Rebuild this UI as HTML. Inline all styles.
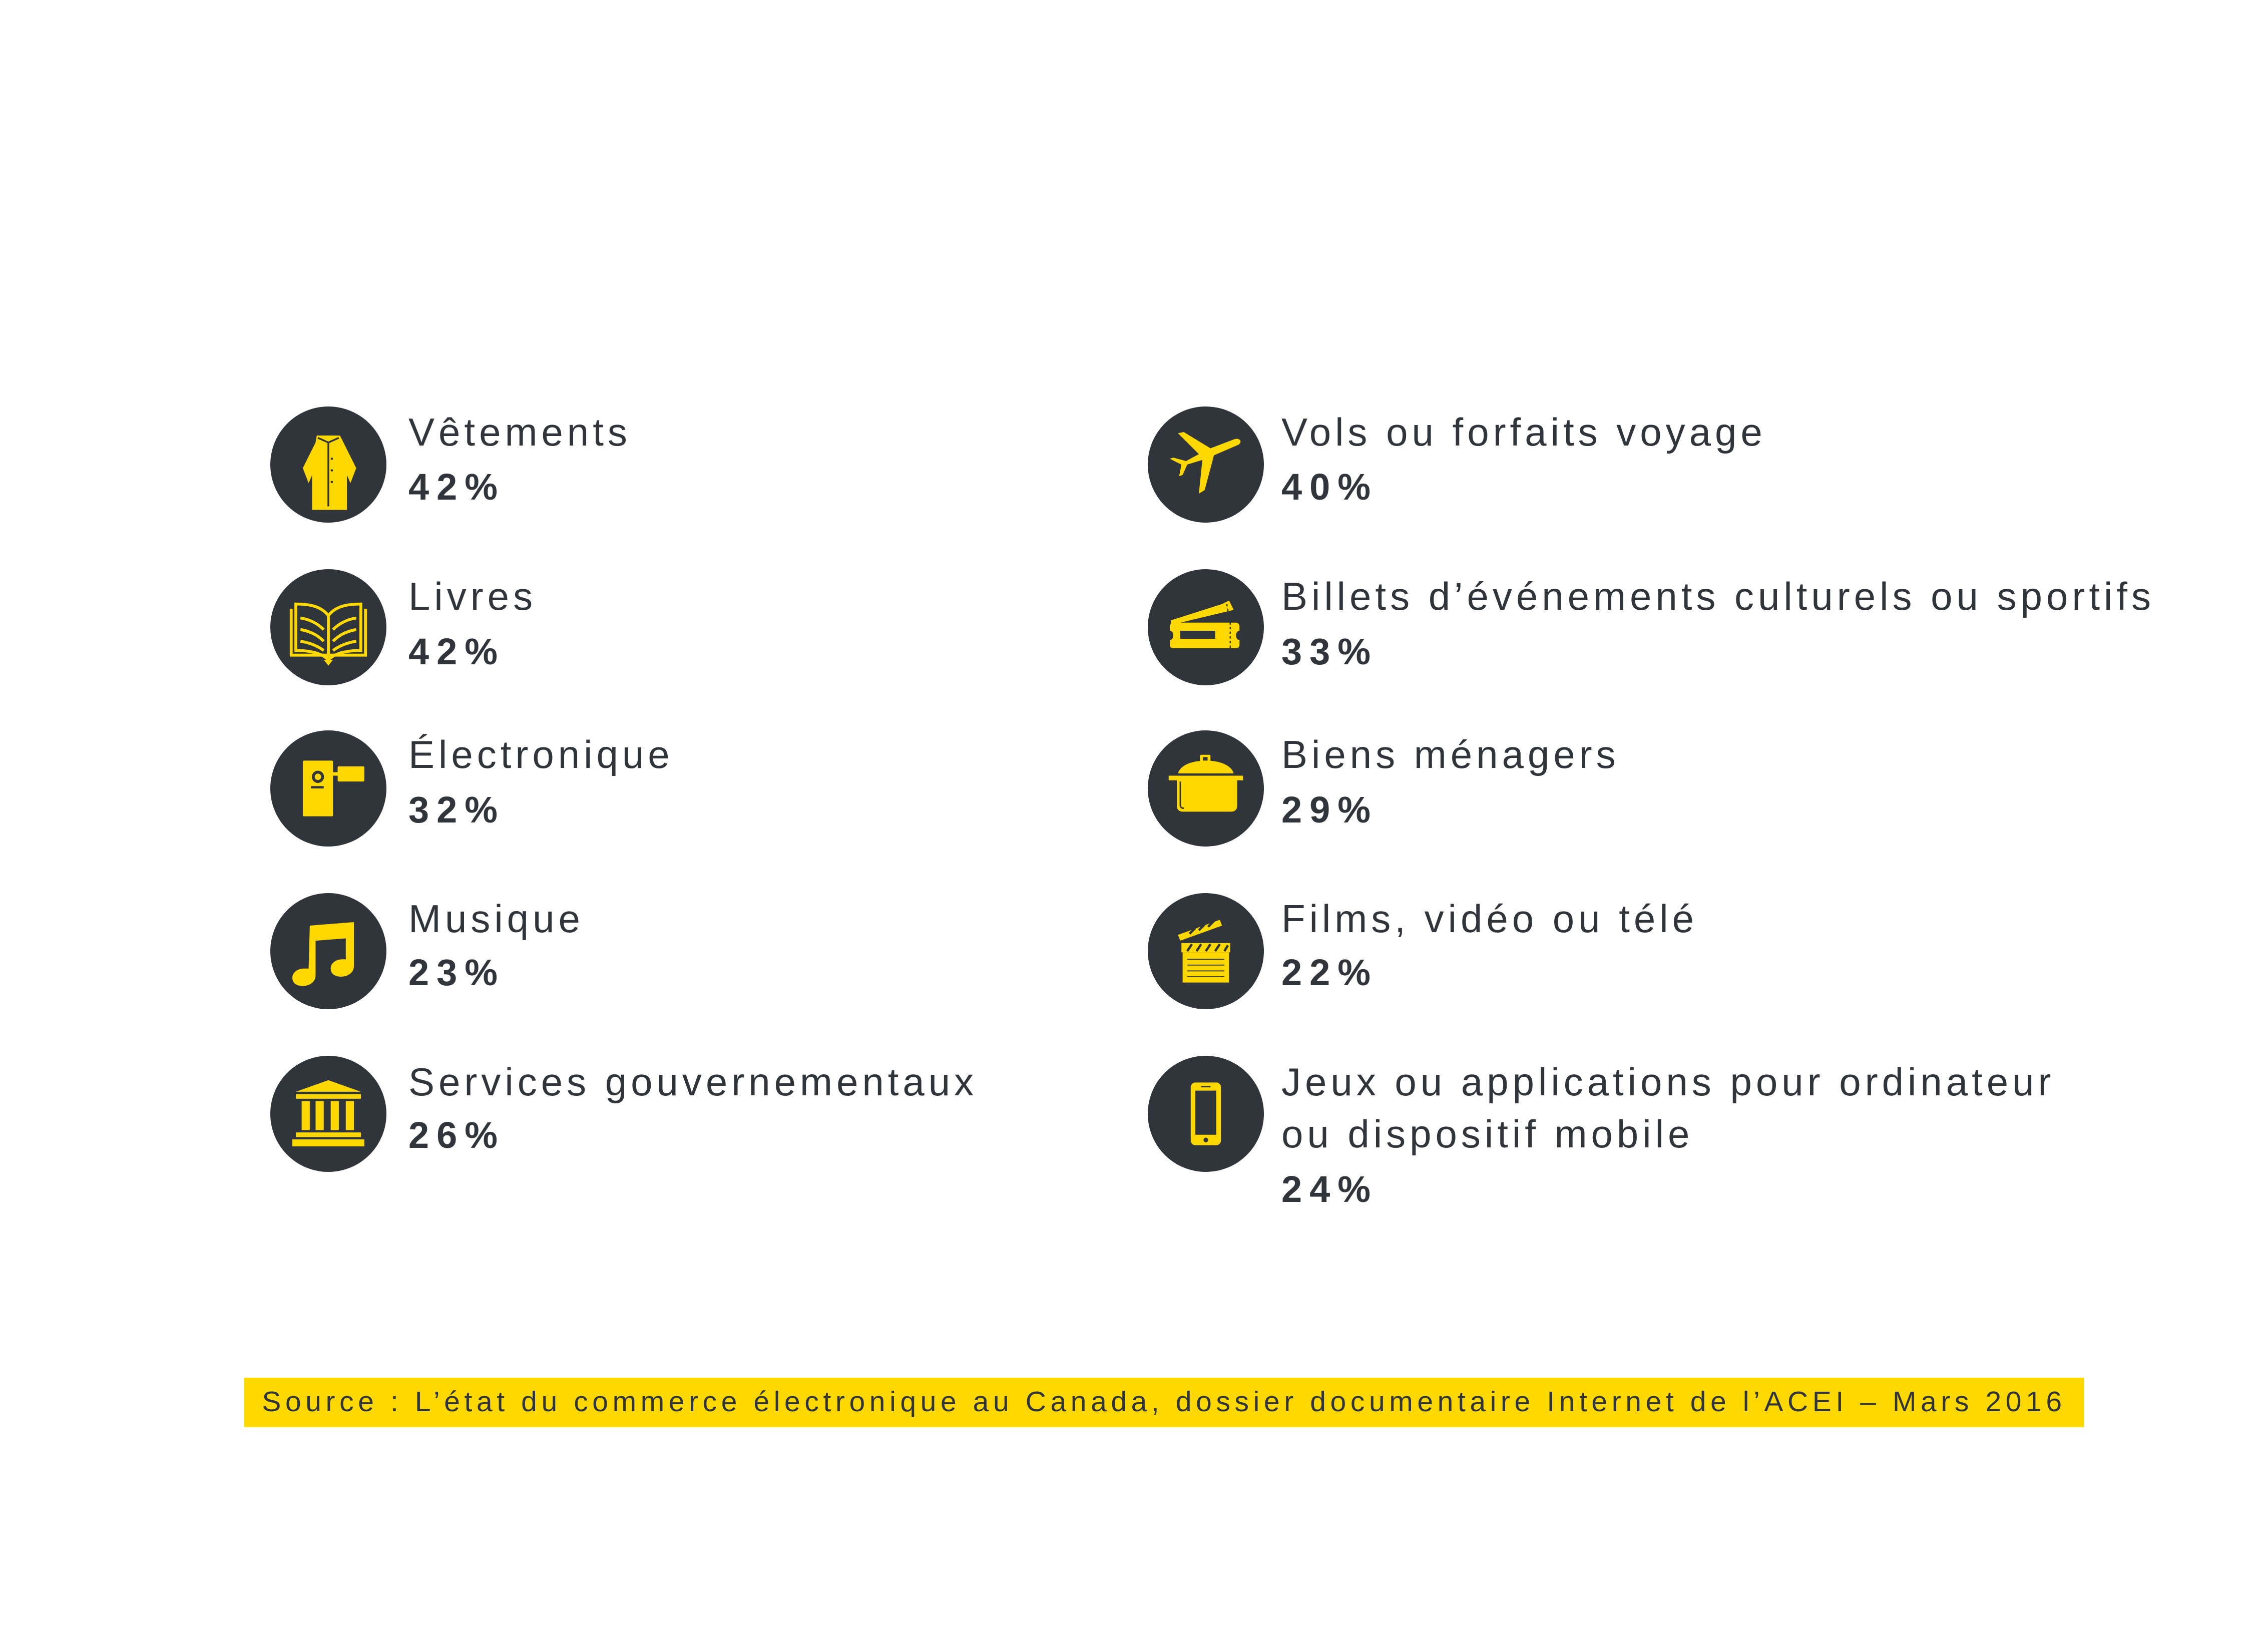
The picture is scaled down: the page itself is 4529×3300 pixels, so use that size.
<!DOCTYPE html>
<html><head><meta charset="utf-8"><style>
html,body{margin:0;padding:0;background:#fff;}
body{width:4529px;height:3300px;position:relative;overflow:hidden;font-family:"Liberation Sans",sans-serif;color:#30343b;}
.c{position:absolute;width:232px;height:232px;border-radius:50%;background:#30343b;}
.c svg{position:absolute;left:0;top:0;width:232px;height:232px;}
.l{position:absolute;font-size:78px;letter-spacing:8px;line-height:1;white-space:nowrap;}
.p{position:absolute;font-size:74px;font-weight:bold;letter-spacing:15px;line-height:1;white-space:nowrap;}
.src{position:absolute;left:488px;top:2752px;width:3675px;height:99px;background:#ffd800;}
.src span{position:absolute;left:0;right:0;top:20px;text-align:center;font-size:57px;letter-spacing:8.6px;line-height:1;white-space:nowrap;}
</style></head><body>

<!-- LEFT COLUMN -->
<div class="c" style="left:540px;top:812px"><svg viewBox="0 0 100 100"><g fill="#ffd800"><path d="M40 25h20l3 6 11 22-5 13-3-7v30H36V59l-3 7-5-13 11-22z"/></g><path d="M41 27l9 4 9-4M50 31v55" stroke="#30343b" stroke-width="1.5" fill="none"/><g fill="#30343b"><circle cx="53" cy="45" r="1"/><circle cx="53" cy="55" r="1"/><circle cx="53" cy="65" r="1"/></g></svg></div>
<div class="l" style="left:816px;top:824px">Vêtements</div>
<div class="p" style="left:816px;top:936px">42%</div>

<div class="c" style="left:540px;top:1137px"><svg viewBox="0 0 100 100"><g fill="none" stroke="#ffd800" stroke-width="2.5"><path d="M18 34v40h64V34"/><path d="M22 30v40c12 0 22 2 28 8 6-6 16-8 28-8V30c-12 0-22 2-28 10-6-8-16-10-28-10z"/><path d="M50 40v38"/><path d="M26 42q12 2 20 10M26 52q12 2 20 10M26 62q12 2 20 8M54 52q8-8 20-10M54 62q8-8 20-10M54 70q8-6 20-8"/></g><path d="M46 78h8l-4 5z" fill="#ffd800"/></svg></div>
<div class="l" style="left:816px;top:1152px">Livres</div>
<div class="p" style="left:816px;top:1265px">42%</div>

<div class="c" style="left:540px;top:1459px"><svg viewBox="0 0 100 100"><g fill="#ffd800"><rect x="28" y="26" width="26" height="48" rx="1"/><rect x="58" y="31" width="23" height="13" rx="1"/><rect x="53" y="36" width="6" height="3"/></g><circle cx="41" cy="40" r="4" fill="none" stroke="#30343b" stroke-width="2.5"/><rect x="35" y="48" width="11" height="2" fill="#30343b"/></svg></div>
<div class="l" style="left:816px;top:1468px">Électronique</div>
<div class="p" style="left:816px;top:1581px">32%</div>

<div class="c" style="left:540px;top:1784px"><svg viewBox="0 0 100 100"><path fill="#ffd800" d="M34 28l38-3v38c0 6-6 9-11 9-6 0-9-3-9-7 0-5 5-8 10-8h3V39l-26 2v30c0 6-6 9-11 9-6 0-9-3-9-7 0-5 5-8 10-8h4z"/></svg></div>
<div class="l" style="left:816px;top:1796px">Musique</div>
<div class="p" style="left:816px;top:1906px">23%</div>

<div class="c" style="left:540px;top:2109px"><svg viewBox="0 0 100 100"><g fill="#ffd800"><path d="M22 31l28-10 28 10z"/><rect x="22" y="33" width="56" height="4"/><rect x="27" y="39" width="7" height="25"/><rect x="39" y="39" width="7" height="25"/><rect x="52" y="39" width="7" height="25"/><rect x="65" y="39" width="7" height="25"/><rect x="22" y="66" width="56" height="4"/><rect x="19" y="72" width="62" height="6"/></g></svg></div>
<div class="l" style="left:816px;top:2122px">Services gouvernementaux</div>
<div class="p" style="left:816px;top:2231px">26%</div>

<!-- RIGHT COLUMN -->
<div class="c" style="left:2293px;top:812px"><svg viewBox="0 0 100 100"><path fill="#ffd800" d="M26 23l5-1 23 14 21-8c4-1 7 2 3 5l-21 9-8 30-5 3 3-29-13 4-4 9-3 1 2-10-10-5 3-1 11 3 11-6z"/></svg></div>
<div class="l" style="left:2560px;top:824px">Vols ou forfaits voyage</div>
<div class="p" style="left:2560px;top:936px">40%</div>

<div class="c" style="left:2293px;top:1137px"><svg viewBox="0 0 100 100"><g fill="#ffd800"><path d="M20 44l44-14 6-3 4 8-54 13z"/><path d="M22 46h54c2 0 3 2 3 3v4c-2 0-3 2-3 4s1 4 3 4v4c0 2-1 3-3 3H22c-2 0-3-1-3-3v-4c2 0 3-2 3-4s-1-4-3-4v-4c0-1 1-3 3-3z"/></g><rect x="28" y="53" width="30" height="7" fill="#30343b"/><path d="M68 30l3 16v22" stroke="#30343b" stroke-width="1" stroke-dasharray="2 2" fill="none"/></svg></div>
<div class="l" style="left:2560px;top:1152px">Billets d’événements culturels ou sportifs</div>
<div class="p" style="left:2560px;top:1265px">33%</div>

<div class="c" style="left:2293px;top:1459px"><svg viewBox="0 0 100 100"><g fill="#ffd800"><rect x="45" y="21" width="9" height="6" rx="1"/><path d="M26 37c2-7 12-11 24-11s22 4 24 11z"/><path d="M18 39h64v4h-5v22c0 3-2 5-5 5H30c-3 0-5-2-5-5V43h-7z"/></g><rect x="47.5" y="23" width="4" height="3" fill="#30343b"/><path d="M28 44v20c0 2 1 3 3 3" stroke="#30343b" stroke-width="1.2" fill="none"/></svg></div>
<div class="l" style="left:2560px;top:1468px">Biens ménagers</div>
<div class="p" style="left:2560px;top:1581px">29%</div>

<div class="c" style="left:2293px;top:1784px"><svg viewBox="0 0 100 100"><g fill="#ffd800"><path d="M26 36l36-13 2 5-36 13z"/><rect x="29" y="43" width="42" height="8"/><rect x="30" y="51" width="40" height="26"/></g><g stroke="#30343b" stroke-width="2"><path d="M36 35l5-5M44 32l5-5M52 29l5-5M34 50l4-6M42 50l4-6M50 50l4-6M58 50l4-6M66 50l3-5"/><path d="M34 57h32M34 62h32M34 67h32M34 72h32" stroke-width="0.8"/></g></svg></div>
<div class="l" style="left:2560px;top:1796px">Films, vidéo ou télé</div>
<div class="p" style="left:2560px;top:1906px">22%</div>

<div class="c" style="left:2293px;top:2109px"><svg viewBox="0 0 100 100"><rect x="37" y="23" width="26" height="54" rx="4" fill="#ffd800"/><rect x="41" y="30" width="18" height="38" fill="#30343b"/><circle cx="50" cy="72.5" r="2" fill="#30343b"/><rect x="46" y="26" width="8" height="1.2" fill="#30343b"/></svg></div>
<div class="l" style="left:2560px;top:2122px">Jeux ou applications pour ordinateur</div>
<div class="l" style="left:2560px;top:2226px">ou dispositif mobile</div>
<div class="p" style="left:2560px;top:2339px">24%</div>

<div class="src"><span>Source : L’état du commerce électronique au Canada, dossier documentaire Internet de l’ACEI – Mars 2016</span></div>
</body></html>
